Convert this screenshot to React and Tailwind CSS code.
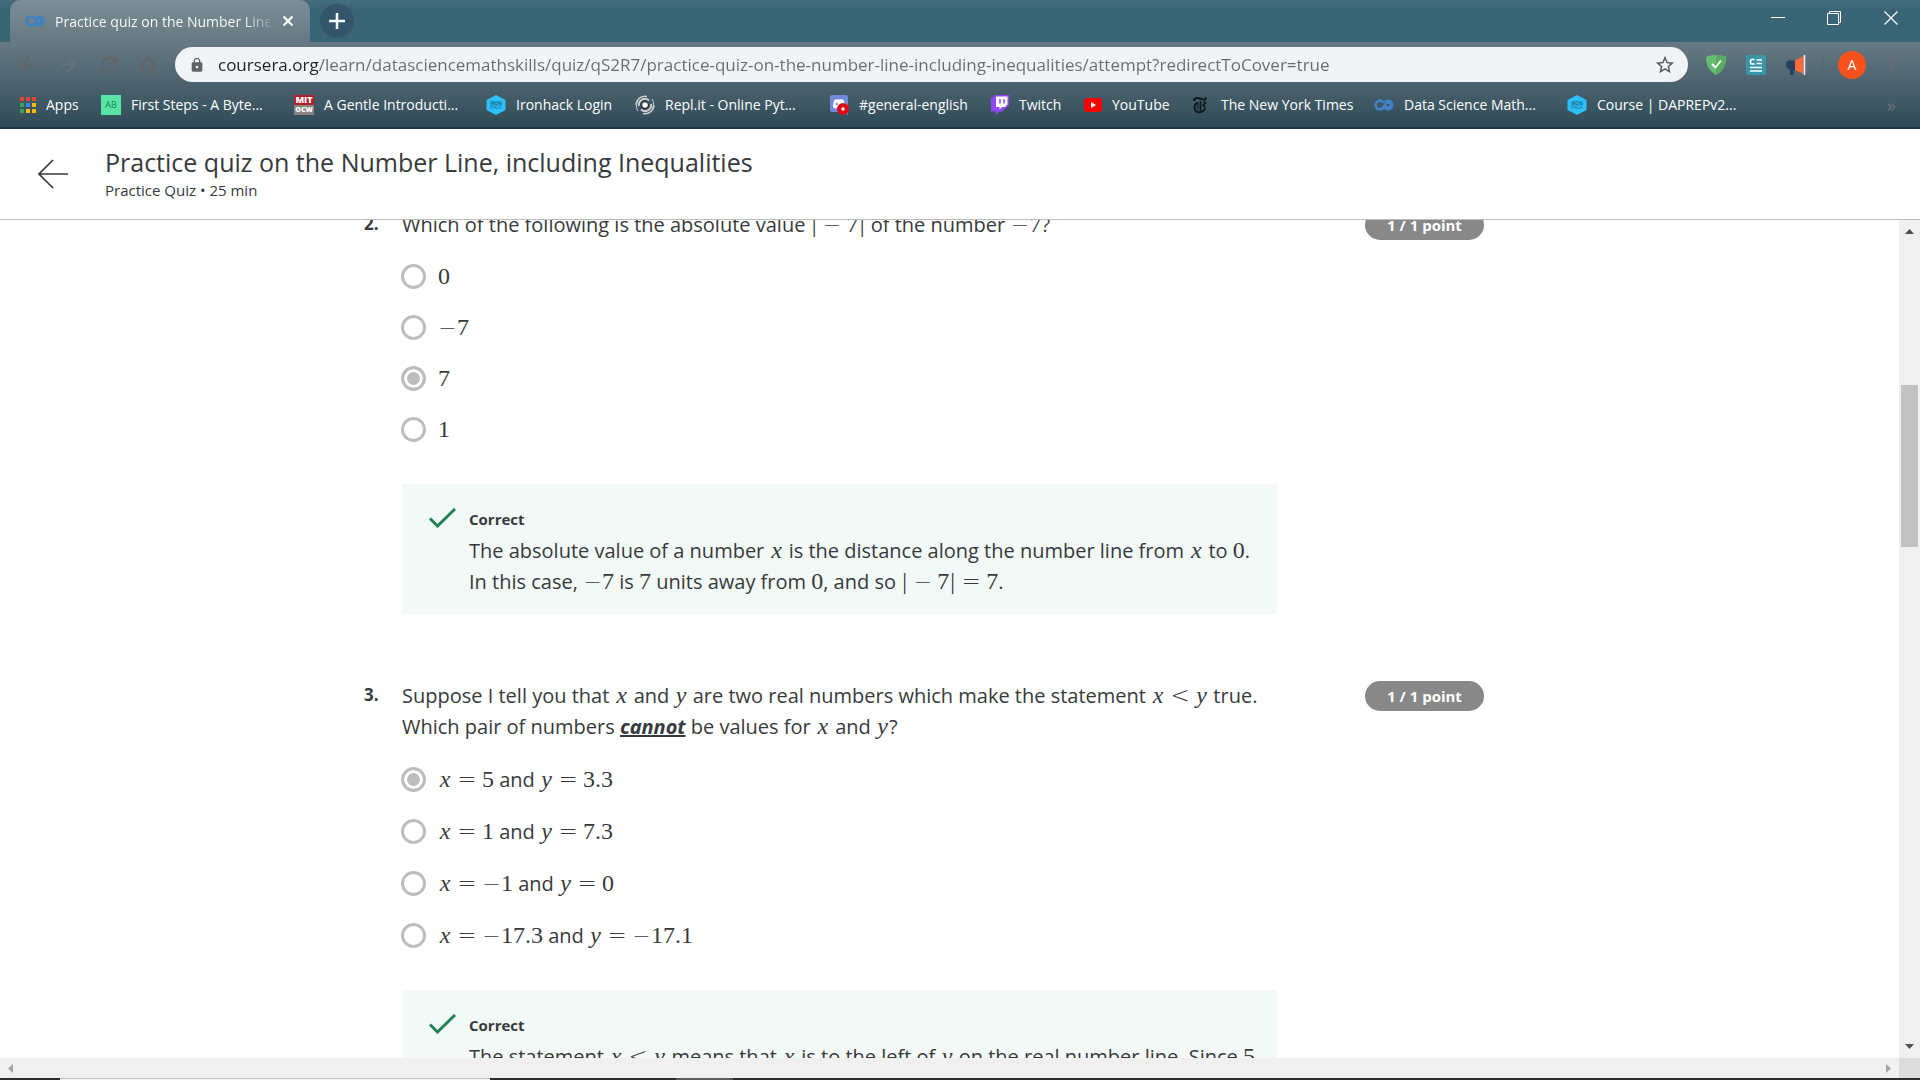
import React from "react";
import {
  MdArrowBack,
  MdArrowForward,
  MdRefresh,
  MdLock,
  MdStarOutline,
  MdMoreVert,
} from "react-icons/md";

/* ---------- Bookmark and toolbar icons ---------- */

function CourseraIcon() {
  return (
    <svg viewBox="0 0 20 20" className="size-5 shrink-0" fill="none" stroke="#3f83c6" aria-hidden="true">
      <path
        d="M9.6 7.6C8.6 6.3 7.4 5.6 6 5.6a4.4 4.4 0 1 0 0 8.8c2.2 0 3.3-1.4 4.2-3.1C11.200 9 12 7.400 14 7.400a2.600 2.600 0 1 1 0 5.200c-1 0-1.700-.5-2.200-1.300"
        strokeWidth="2.600"
      />
      <path d="M10.600 6.900C11.500 6 12.700 5.500 14 5.500a4.500 4.500 0 1 1 0 9c-1.600 0-3-.8-4-2.300" strokeWidth="2" />
    </svg>
  );
}

function AppsIcon() {
  const colors = [
    "#ea4335", "#ea4335", "#ea4335",
    "#34a853", "#4285f4", "#fbbc05",
    "#34a853", "#fbbc05", "#fbbc05",
  ];
  return (
    <svg viewBox="0 0 16 16" className="size-4 shrink-0" aria-hidden="true">
      {colors.map((c, i) => (
        <rect key={i} x={(i % 3) * 6} y={Math.floor(i / 3) * 6} width="4" height="4" fill={c} />
      ))}
    </svg>
  );
}

function AbIcon() {
  return (
    <span className="flex size-5 shrink-0 items-center justify-center bg-[#56e5a4] text-[9px] leading-none text-[#1d7f58]">
      AB
    </span>
  );
}

function MitIcon() {
  return (
    <span className="flex size-5 shrink-0 flex-col text-center text-[9px] font-black leading-[10px] text-white">
      <span className="bg-[#b4202a]">MIT</span>
      <span className="flex justify-center bg-[#8b8680] text-[7px]">OCW</span>
    </span>
  );
}

function IronhackIcon() {
  return (
    <svg viewBox="0 0 20 20" className="size-5 shrink-0" aria-hidden="true">
      <path d="M10 0l9.500 5v10L10 20 .5 15V5z" fill="#2dc0fb" />
      <text x="10" y="9.500" textAnchor="middle" fontSize="4.500" fontWeight="700" fill="#17668c">IRON</text>
      <text x="10" y="14" textAnchor="middle" fontSize="4.500" fill="#17668c">HACK</text>
    </svg>
  );
}

function ReplIcon() {
  return (
    <svg viewBox="0 0 20 20" className="size-5 shrink-0" fill="none" stroke="#c9cdd0" aria-hidden="true">
      <circle cx="10" cy="10" r="3.500" fill="#fff" stroke="#2b3236" strokeWidth="1.500" />
      <path d="M4 11a6 6 0 0 1 10-5.500M16 9a6 6 0 0 1-10 5.500" strokeWidth="2" />
      <path d="M1 10a9 9 0 0 1 11-8.500M19 10a9 9 0 0 1-11 8.500" strokeWidth="1.500" />
      <path d="M3 16c-2-3-2-7 0-10M17 4c2 3 2 7 0 10" strokeWidth="1" />
    </svg>
  );
}

function DiscordIcon() {
  return (
    <svg viewBox="0 0 20 20" className="size-5 shrink-0" aria-hidden="true">
      <path d="M1 2a2 2 0 0 1 2-2h14a2 2 0 0 1 2 2v18l-4-3H3a2 2 0 0 1-2-2z" fill="#7289da" />
      <path d="M4 12c0-3 .5-5 1.500-7C7 4 8 4 8.500 4.500h3C12 4 13.500 4 14.500 5c1 2 1.500 4 1.500 7-1 1-2 1.500-3.500 1.500l-.5-1H8l-.5 1C6 13.500 5 13 4 12z" fill="#fff" />
      <circle cx="7.800" cy="9" r="1.200" fill="#7289da" />
      <circle cx="14" cy="14" r="6" fill="#e0090f" />
      <circle cx="14" cy="14" r="1.700" fill="#fff" />
    </svg>
  );
}

function TwitchIcon() {
  return (
    <svg viewBox="0 0 18 20" className="h-5 w-[18px] shrink-0" aria-hidden="true">
      <path d="M4 0L0 4v12.500h5V20l3.500-3.500H11l7-6.500V0z" fill="#9146ff" />
      <path d="M5 1.500h11.500v8L14 12h-3l-2.500 2.500V12H5z" fill="#fff" />
      <path d="M9 4v4.500M13 4v4.500" stroke="#9146ff" strokeWidth="1.500" />
    </svg>
  );
}

function YouTubeIcon() {
  return (
    <svg viewBox="0 0 18 14" className="h-[14px] w-[18px] shrink-0" aria-hidden="true">
      <rect width="18" height="14" rx="3.500" fill="#f00" />
      <path d="M7 4l5 3-5 3z" fill="#fff" />
    </svg>
  );
}

function NytIcon() {
  return (
    <svg viewBox="0 0 14 18" className="mr-1 h-[18px] w-[14px] shrink-0" fill="none" stroke="#11181c" aria-hidden="true">
      <path d="M1 5c0-2 1-3 3-3 2.500 0 4.500 1.500 7 1.500 1.200 0 2-.8 1.800-2" strokeWidth="2.200" />
      <path d="M4 6.500C2 8 1.200 10 1.700 12.500c.6 2.500 2.800 4 5.300 3.800 2.800-.3 4.300-1.800 5-4" strokeWidth="2" />
      <path d="M7.500 5v10M10.500 5.500l2 1.500-2.500 2.500 2.500 2" strokeWidth="1.600" />
      <path d="M2.500 8.500L5 7v6" strokeWidth="1.200" />
    </svg>
  );
}

function HomeIcon() {
  return (
    <svg viewBox="0 0 20 20" className="size-5" fill="none" stroke="currentColor" strokeWidth="2" aria-hidden="true">
      <path d="M10 2.500L2.500 10H5v7.500h10V10h2.500z" />
    </svg>
  );
}

function ShieldIcon() {
  return (
    <svg viewBox="0 0 20 20" className="size-5" aria-hidden="true">
      <path d="M10 0c3.500 0 6.500.6 10 1.800C20 10 17.500 16 10 20 2.500 16 0 10 0 1.800 3.500.6 6.500 0 10 0z" fill="#68bc71" />
      <path d="M10 0c3.500 0 6.500.6 10 1.800C20 10 17.500 16 10 20z" fill="#5aab62" />
      <path d="M6 9l3.500 3.500L15 5.500" fill="none" stroke="#fff" strokeWidth="1.800" />
    </svg>
  );
}

function ReaderIcon() {
  return (
    <svg viewBox="0 0 20 20" className="size-5" aria-hidden="true">
      <rect width="20" height="20" rx="2" fill="#3b95a8" />
      <path d="M8.500 4.500H6A1.500 1.500 0 0 0 4.500 6v1.500A1.500 1.500 0 0 0 6 9h2.500M10.500 5H16M10.500 8.500H16M4 12.500h12M4 16h12" fill="none" stroke="#fff" strokeWidth="1.700" />
    </svg>
  );
}

function MegaphoneIcon() {
  return (
    <svg viewBox="0 0 20 20" className="size-5" aria-hidden="true">
      <path d="M0 9a3.500 3.500 0 0 1 3.500-3.500H9v10H7.500V20H4v-5.500C1.500 14 0 12.500 0 9z" fill="#263f5c" />
      <path d="M9 5.500L17.500 1v18L9 15z" fill="#fc6b39" />
      <path d="M18.500 0v20" stroke="#e9edf0" strokeWidth="1.600" />
    </svg>
  );
}

/* ---------- Browser chrome ---------- */

const bookmarks = [
  { icon: <AppsIcon />, label: "Apps", width: "w-[81px]" },
  { icon: <AbIcon />, label: "First Steps - A Byte...", width: "w-[193px]" },
  { icon: <MitIcon />, label: "A Gentle Introducti...", width: "w-[192px]" },
  { icon: <IronhackIcon />, label: "Ironhack Login", width: "w-[149px]" },
  { icon: <ReplIcon />, label: "Repl.it - Online Pyt...", width: "w-[194px]" },
  { icon: <DiscordIcon />, label: "#general-english", width: "w-[162px]" },
  { icon: <TwitchIcon />, label: "Twitch", width: "w-[93px]" },
  { icon: <YouTubeIcon />, label: "YouTube", width: "w-[109px]" },
  { icon: <NytIcon />, label: "The New York Times", width: "w-[181px]" },
  { icon: <CourseraIcon />, label: "Data Science Math...", width: "w-[193px]" },
  { icon: <IronhackIcon />, label: "Course | DAPREPv2...", width: "w-[170px]" },
];

function TabStrip() {
  return (
    <div className="flex h-[42px] bg-linear-to-b from-[#456d80] to-[#386476] to-25% pl-[10px]">
      <div className="flex w-[300px] items-center rounded-t-[10px] bg-linear-to-b from-[#7b8d95] to-[#677a83] pl-[15px] pr-3">
        <CourseraIcon />
        <span className="ml-[10px] w-[220px] overflow-hidden whitespace-nowrap bg-linear-to-r from-white from-88% to-white/20 bg-clip-text text-[14px] text-transparent">
          Practice quiz on the Number Line
        </span>
        <button aria-label="Close tab" className="ml-2 flex size-5 shrink-0 items-center justify-center text-white">
          <svg viewBox="0 0 12 12" className="size-3" stroke="currentColor" strokeWidth="2">
            <path d="M1.500 1.500l9 9M10.500 1.500l-9 9" />
          </svg>
        </button>
      </div>
      <button aria-label="New tab" className="ml-[10px] mt-1 flex size-[34px] items-center justify-center rounded-full bg-[#33566a] text-white">
        <svg viewBox="0 0 16 16" className="size-4" stroke="currentColor" strokeWidth="2.500">
          <path d="M8 0v16M0 8h16" />
        </svg>
      </button>
      <div className="ml-auto flex h-9 text-white">
        <button aria-label="Minimize" className="flex w-14 items-center justify-center">
          <svg viewBox="0 0 14 14" className="size-[14px]" stroke="currentColor">
            <path d="M0 6.500h14" />
          </svg>
        </button>
        <button aria-label="Restore" className="flex w-14 items-center justify-center">
          <svg viewBox="0 0 14 14" className="size-[14px]" fill="none" stroke="currentColor">
            <path d="M.5 2.500h11v11H.5zM2.500 2.500v-2h11v11h-2" />
          </svg>
        </button>
        <button aria-label="Close" className="flex w-[58px] items-center justify-center">
          <svg viewBox="0 0 14 14" className="size-[14px]" stroke="currentColor" strokeWidth="1.200">
            <path d="M.5.5l13 13M13.500.5l-13 13" />
          </svg>
        </button>
      </div>
    </div>
  );
}

function Toolbar() {
  return (
    <div className="flex h-[45px] items-center pl-[17px] pr-4">
      <div className="flex w-[158px] gap-[17px] text-[#626468]">
        <button aria-label="Back"><MdArrowBack className="size-[23px]" /></button>
        <button aria-label="Forward" className="text-[#68737a]"><MdArrowForward className="size-[23px]" /></button>
        <button aria-label="Reload"><MdRefresh className="size-6" /></button>
        <button aria-label="Home"><HomeIcon /></button>
      </div>
      <div className="flex h-[35px] flex-1 items-center rounded-full bg-[#f1f3f5] pl-[14px] pr-3">
        <MdLock className="size-4 text-[#5f6368]" />
        <input
          aria-label="Address"
          readOnly
          value="coursera.org/learn/datasciencemathskills/quiz/qS2R7/practice-quiz-on-the-number-line-including-inequalities/attempt?redirectToCover=true"
          className="ml-[13px] min-w-0 flex-1 bg-linear-to-r from-[#202124] from-[101px] to-[#686b70] to-[101px] bg-clip-text text-[17px] text-transparent outline-none"
        />
        <button aria-label="Bookmark this page" className="text-[#55595d]"><MdStarOutline className="size-[22px]" /></button>
      </div>
      <div className="flex items-center pl-[18px]">
        <button aria-label="Ad blocker" className="mr-5"><ShieldIcon /></button>
        <button aria-label="Reader" className="mr-5"><ReaderIcon /></button>
        <button aria-label="Announcements"><MegaphoneIcon /></button>
        <span className="ml-4 h-5 w-px bg-[#53656f]" />
        <button aria-label="Account" className="ml-[15px] flex size-7 items-center justify-center rounded-full bg-[#f9511d] text-sm text-white">
          A
        </button>
        <button aria-label="Menu" className="ml-[14px] text-[#6a6b70]"><MdMoreVert className="size-6" /></button>
      </div>
    </div>
  );
}

function BookmarkBar() {
  return (
    <nav aria-label="Bookmarks" className="flex h-10 items-center pb-[5px] pl-5 pr-6 text-[14px] text-white">
      {bookmarks.map((b) => (
        <a key={b.label} href="#" className={"flex shrink-0 items-center gap-[10px] whitespace-nowrap " + b.width}>
          {b.icon}
          {b.label}
        </a>
      ))}
      <button aria-label="More bookmarks" className="ml-auto text-lg leading-none text-[#6d7479]">»</button>
    </nav>
  );
}

/* ---------- Math typography ---------- */

const M = ({ children }) => (
  <span className="whitespace-nowrap font-['Liberation_Serif',serif] text-[24px] leading-none">{children}</span>
);
const X = () => <i className="inline-block w-[14px] text-center">x</i>;
const Y = () => <i className="inline-block w-[13px] text-center">y</i>;
const Rel = ({ children }) => (
  <span className="mx-[5px] inline-block w-5 text-center font-['DejaVu_Sans',sans-serif] text-[23px] font-extralight leading-none">
    {children}
  </span>
);
const Minus = () => (
  <span className="inline-block w-[19px] text-center font-['DejaVu_Sans',sans-serif] text-[22px] font-extralight leading-none">−</span>
);
const Bar = () => <span className="inline-block w-[7px] text-center">|</span>;

const AbsSeven = () => (
  <>
    <Bar /><span className="ml-[5px]"><Minus /></span><span className="ml-[5px]">7</span><Bar />
  </>
);

/* ---------- Quiz ---------- */

function Option({ name, checked, height, children }) {
  return (
    <label className={"-ml-px flex items-center gap-3 " + height}>
      <input
        type="radio"
        name={name}
        defaultChecked={checked}
        className="size-[25px] shrink-0 appearance-none rounded-full border-[3px] border-[#bdbdbd] bg-white checked:bg-[#bdbdbd] checked:shadow-[inset_0_0_0_3px_white]"
      />
      <span>{children}</span>
    </label>
  );
}

function Feedback({ children }) {
  return (
    <div className="mt-[29px] flex bg-[#f3f9f7] pb-[17px] pl-[27px] pt-[23px]">
      <svg viewBox="0 0 27 20" className="mt-px h-5 w-[27px] shrink-0" fill="none" stroke="#1f8354" strokeWidth="3" aria-hidden="true">
        <path d="M1 10.500L8.500 18 26 1" />
      </svg>
      <div className="ml-[13px]">
        <h3 className="text-[15px] font-bold leading-6">Correct</h3>
        <p className="mt-1 whitespace-nowrap">{children}</p>
      </div>
    </div>
  );
}

function Question({ number, prompt, options, feedback }) {
  return (
    <section className="mx-auto mb-[66px] flex max-w-[1171px] items-start">
      <span className="w-[38px] shrink-0 text-[17px] font-bold leading-[30px]">{number}.</span>
      <div className="w-[875px]">
        <p className="whitespace-nowrap">{prompt}</p>
        <div className="mt-[11px]">{options}</div>
        <Feedback>{feedback}</Feedback>
      </div>
      <span className="ml-[88px] mt-px w-[119px] rounded-full bg-[#888] text-center text-[15px] font-bold leading-[30px] text-white">
        1 / 1 point
      </span>
    </section>
  );
}

function QuizHeader() {
  return (
    <header className="flex h-[91px] items-center border-b border-[#bdbdbd] bg-white pl-[38px]">
      <button aria-label="Back" className="text-[#373a3c]">
        <svg viewBox="0 0 30 30" className="size-[30px]" fill="none" stroke="currentColor" strokeWidth="1.700">
          <path d="M15 1L1 15l14 14M1 15h29" />
        </svg>
      </button>
      <div className="ml-[37px]">
        <h1 className="text-[25px] leading-8">Practice quiz on the Number Line, including Inequalities</h1>
        <p className="text-[15px] leading-6">Practice Quiz • 25 min</p>
      </div>
    </header>
  );
}

/* ---------- Scroll bars ---------- */

function VerticalScrollbar() {
  return (
    <div className="flex w-[21px] flex-col items-center bg-[#f0f0f0]" aria-hidden="true">
      <svg viewBox="0 0 9 5" className="mt-[9px] h-[5px] w-[9px] fill-[#505050]"><path d="M0 5L4.500 0 9 5z" /></svg>
      <div className="mt-[151px] h-[162px] w-[17px] bg-[#c1c1c1]" />
      <svg viewBox="0 0 9 5" className="mb-[9px] mt-auto h-[5px] w-[9px] fill-[#505050]"><path d="M0 0h9L4.500 5z" /></svg>
    </div>
  );
}

function HorizontalScrollbar() {
  return (
    <div className="flex h-5 shrink-0 bg-[#f0f0f0]" aria-hidden="true">
      <div className="flex flex-1 items-center justify-between px-2">
        <svg viewBox="0 0 5 9" className="h-[9px] w-[5px] fill-[#a3a3a3]"><path d="M5 0v9L0 4.500z" /></svg>
        <svg viewBox="0 0 5 9" className="h-[9px] w-[5px] fill-[#a3a3a3]"><path d="M0 0v9l5-4.500z" /></svg>
      </div>
      <div className="w-[21px] bg-[#dcdcdc]" />
    </div>
  );
}

export default function App() {
  return (
    <div className="flex h-screen flex-col overflow-hidden bg-white font-['Open_Sans','Noto_Sans',sans-serif] text-[#373a3c]">
      <div className="shrink-0 border-b-2 border-[#1c3442]">
        <TabStrip />
        <div className="bg-linear-to-b from-[#677a83] to-[#2f4b58]">
          <Toolbar />
          <BookmarkBar />
        </div>
      </div>

      <QuizHeader />

      <div className="flex min-h-0 flex-1">
        <main className="min-w-0 flex-1 overflow-hidden text-[20px] leading-[31px]">
          <div className="-mt-[11px]">
            <Question
              number={2}
              prompt={
                <>
                  Which of the following is the absolute value <M><AbsSeven /></M> of the number <M><Minus />7</M>?
                </>
              }
              options={
                <>
                  <Option name="q2" height="h-[51px]"><M>0</M></Option>
                  <Option name="q2" height="h-[51px]"><M><Minus />7</M></Option>
                  <Option name="q2" height="h-[51px]" checked><M>7</M></Option>
                  <Option name="q2" height="h-[51px]"><M>1</M></Option>
                </>
              }
              feedback={
                <>
                  The absolute value of a number <M><X /></M> is the distance along the number line from <M><X /></M> to <M>0</M>.
                  <br />
                  In this case, <M><Minus />7</M> is <M>7</M> units away from <M>0</M>, and so{" "}
                  <M><AbsSeven /><Rel>=</Rel>7</M>.
                </>
              }
            />
            <Question
              number={3}
              prompt={
                <>
                  Suppose I tell you that <M><X /></M> and <M><Y /></M> are two real numbers which make the statement{" "}
                  <M><X /><Rel>&lt;</Rel><Y /></M> true.
                  <br />
                  Which pair of numbers <b className="font-['Noto_Sans',sans-serif] italic leading-none underline decoration-2">cannot</b> be values for <M><X /></M> and <M><Y /></M>?
                </>
              }
              options={
                <>
                  <Option name="q3" height="h-[52px]" checked>
                    <M><X /><Rel>=</Rel>5</M> and <M><Y /><Rel>=</Rel>3.3</M>
                  </Option>
                  <Option name="q3" height="h-[52px]">
                    <M><X /><Rel>=</Rel>1</M> and <M><Y /><Rel>=</Rel>7.3</M>
                  </Option>
                  <Option name="q3" height="h-[52px]">
                    <M><X /><Rel>=</Rel><Minus />1</M> and <M><Y /><Rel>=</Rel>0</M>
                  </Option>
                  <Option name="q3" height="h-[52px]">
                    <M><X /><Rel>=</Rel><Minus />17.3</M> and <M><Y /><Rel>=</Rel><Minus />17.1</M>
                  </Option>
                </>
              }
              feedback={
                <>
                  The statement <M><X /><Rel>&lt;</Rel><Y /></M> means that <M><X /></M> is to the left of <M><Y /></M> on the real number line. Since <M>5</M>
                </>
              }
            />
          </div>
        </main>
        <VerticalScrollbar />
      </div>

      <HorizontalScrollbar />
      <div className="flex h-0.5 shrink-0 bg-[#2d2d2d]">
        <div className="ml-[60px] w-[430px] border-t border-[#c1c1c1] bg-[#f5f5f5]" />
        <div className="ml-[186px] w-[57px] bg-[#5a5a5a]" />
      </div>
    </div>
  );
}
